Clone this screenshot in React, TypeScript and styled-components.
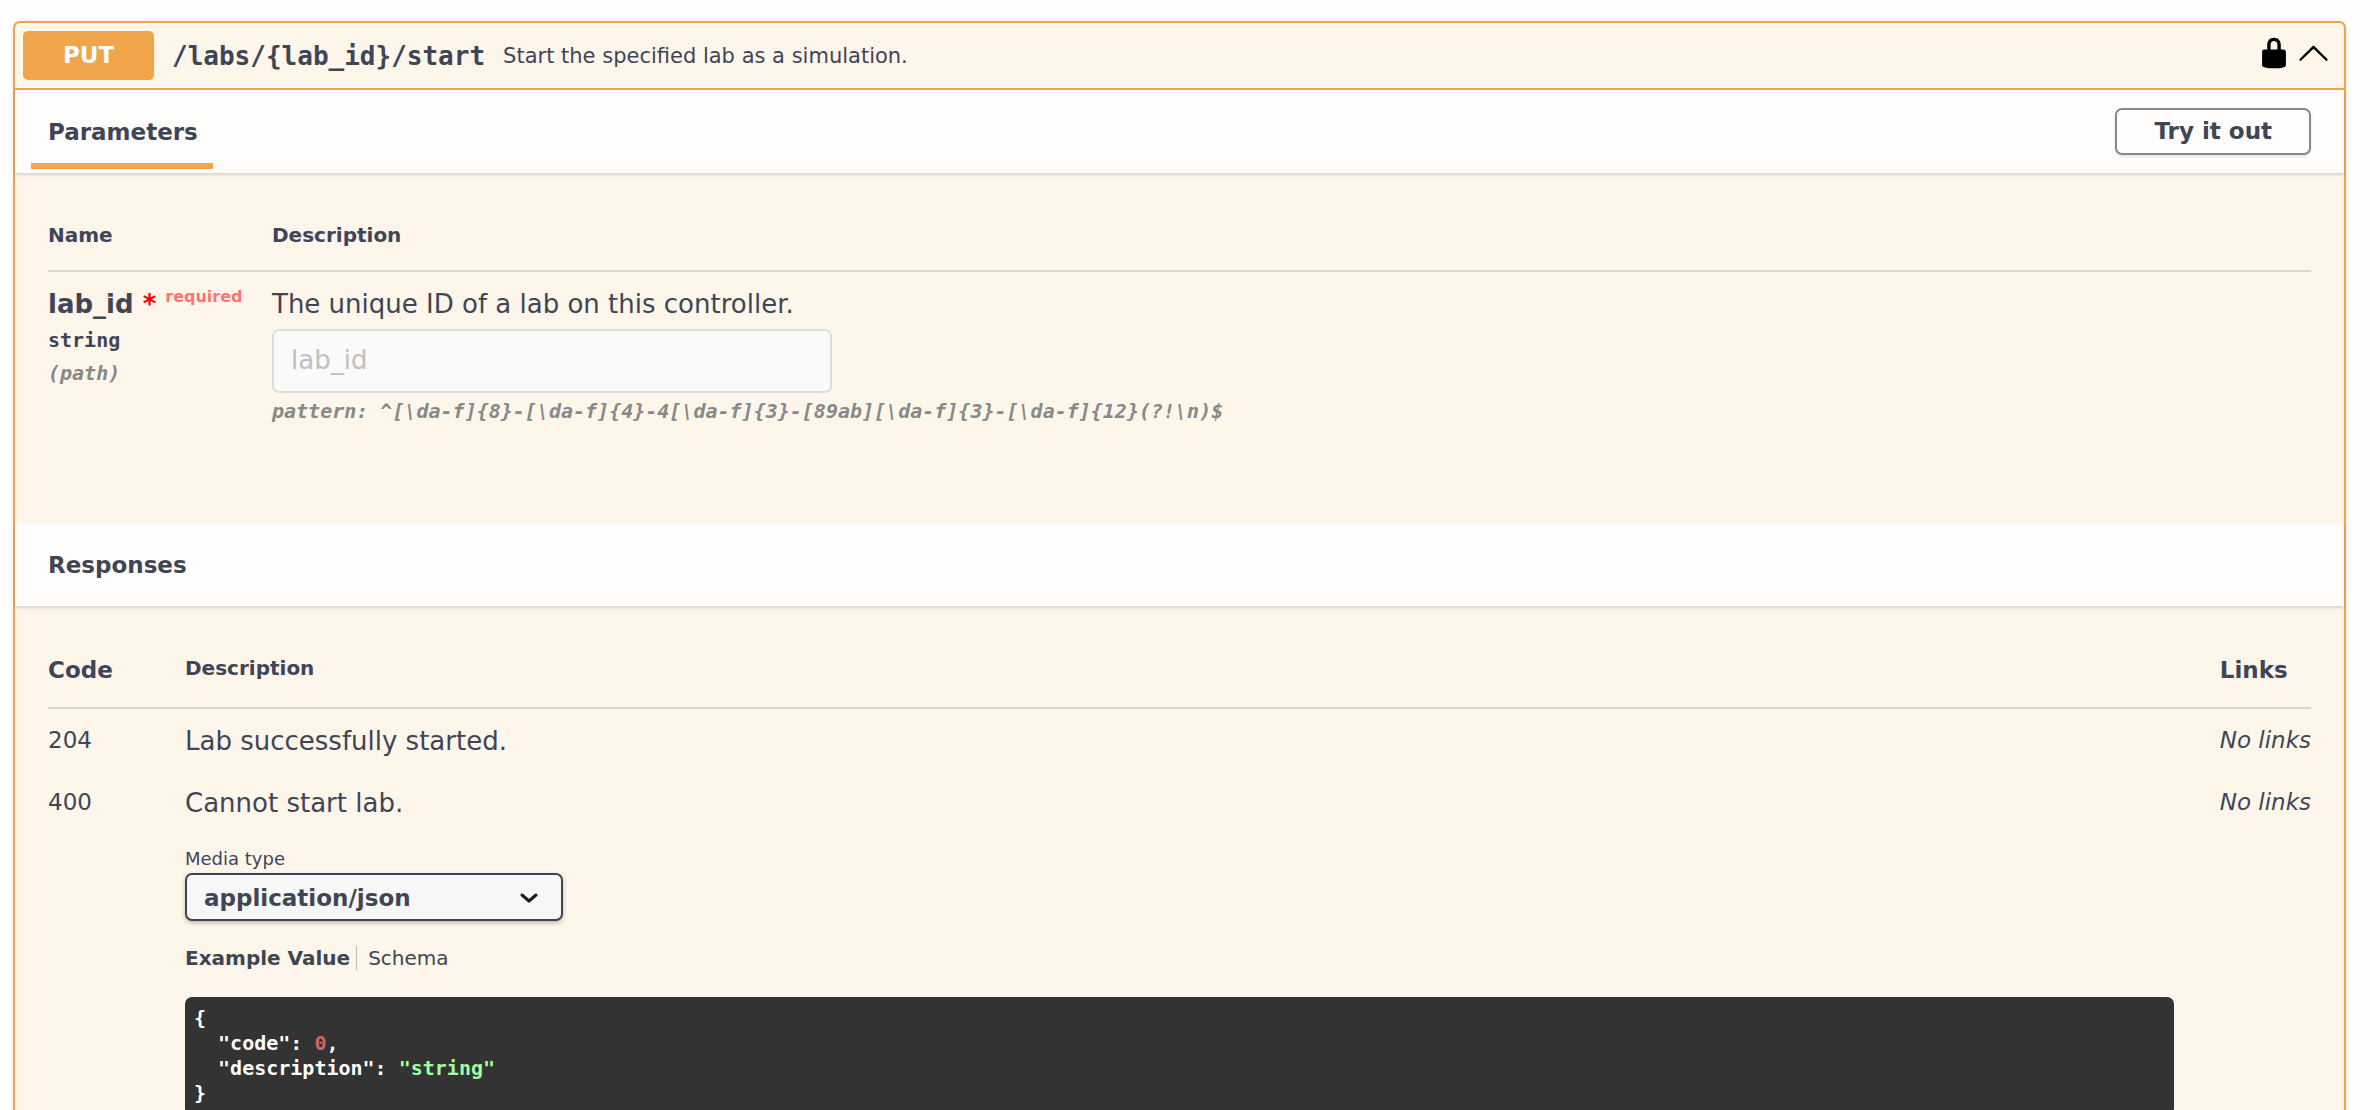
import React, { useState } from "react";
import styled, { createGlobalStyle } from "styled-components";

const ink = "#404556";
const orange = "#f0a54b";
const sans = `"DejaVu Sans", Verdana, sans-serif`;
const mono = `"DejaVu Sans Mono", monospace`;

const GlobalStyle = createGlobalStyle`
  *, *::before, *::after { box-sizing: border-box; }
  body { margin: 0; background: #fefefe; color: ${ink}; font-family: ${sans}; }
  button, input, select { font-family: inherit; color: inherit; }
  h4, p, pre { margin: 0; }
`;

const Page = styled.main`
  height: 100vh;
  overflow: hidden;
  padding: 21px 24px 0 13px;
`;

const Operation = styled.section`
  border: 2px solid ${orange};
  border-radius: 7px;
  background: #fef6ea;
  box-shadow: 0 0 4px rgba(0, 0, 0, 0.1);
`;

const Summary = styled.header`
  display: flex;
  align-items: center;
  padding: 8px 14px 8px 8px;
  border-bottom: 2px solid ${orange};
`;

const Method = styled.span`
  width: 131px;
  border-radius: 5px;
  background: ${orange};
  color: #fff;
  font-size: 23px;
  font-weight: 700;
  line-height: 49px;
  text-align: center;
`;

const Path = styled.span`
  padding: 0 18px;
  font-family: ${mono};
  font-size: 26px;
  font-weight: 700;
  line-height: 30px;
`;

const SummaryText = styled.span`
  flex: 1;
  font-size: 21px;
  line-height: 30px;
`;

const IconButton = styled.button`
  display: flex;
  margin: 0 0 6px 6px;
  padding: 0;
  border: 0;
  background: none;
  cursor: pointer;
`;

const SectionHeader = styled.div`
  display: flex;
  align-items: flex-start;
  justify-content: space-between;
  min-height: 83px;
  padding: 0 33px 0 16px;
  background: #fefdfc;
  box-shadow: 0 2px 3px rgba(0, 0, 0, 0.14);
`;

const SectionTitle = styled.h4<{ $active?: boolean }>`
  padding: 11px 15px 0 17px;
  border-bottom: 6px solid ${(p) => (p.$active ? orange : "transparent")};
  font-size: 23px;
  line-height: 62px;
`;

const TryButton = styled.button`
  align-self: center;
  padding: 0 37px;
  border: 2px solid #888;
  border-radius: 7px;
  background: transparent;
  box-shadow: 0 2px 3px rgba(0, 0, 0, 0.1);
  font-size: 23px;
  font-weight: 700;
  line-height: 43px;
`;

const SectionBody = styled.div<{ $bottom: number }>`
  padding: 50px 33px ${(p) => p.$bottom}px 33px;
`;

const Table = styled.table`
  width: 100%;
  border-collapse: separate;
  border-spacing: 0;
`;

const Th = styled.th<{ $large?: boolean; $width?: number }>`
  width: ${(p) => (p.$width ? `${p.$width}px` : "auto")};
  padding: 0 0 23px;
  border-bottom: 2px solid #dbd5cd;
  font-size: ${(p) => (p.$large ? 23 : 20)}px;
  line-height: ${(p) => (p.$large ? 28 : 24)}px;
  text-align: left;
  vertical-align: top;
`;

const Td = styled.td<{ $right?: number }>`
  padding: 17px ${(p) => p.$right ?? 0}px 15px 0;
  font-size: 23px;
  line-height: 28px;
  vertical-align: top;
  white-space: nowrap;
`;

const Prose = styled.p`
  font-size: 26px;
  line-height: 30px;
`;

const ParamName = styled.label`
  display: block;
  font-size: 26px;
  font-weight: 700;
  line-height: 30px;
`;

const Star = styled.span`
  color: #f00;
`;

const Required = styled.span`
  padding-left: 9px;
  color: rgba(255, 0, 0, 0.55);
  font-size: 16px;
  line-height: 0;
  vertical-align: 11px;
`;

const Meta = styled.div<{ $muted?: boolean; $gap: number }>`
  margin-top: ${(p) => p.$gap}px;
  color: ${(p) => (p.$muted ? "#888" : ink)};
  font-family: ${mono};
  font-size: 20px;
  font-style: ${(p) => (p.$muted ? "italic" : "normal")};
  font-weight: 700;
  line-height: 24px;
`;

const TextBox = styled.input`
  display: block;
  width: 560px;
  height: 64px;
  margin-top: 10px;
  padding: 0 17px 2px;
  border: 2px solid #dcdcdc;
  border-radius: 7px;
  background: #fafafa;
  font-size: 26px;
  &::placeholder { color: #c0c0c0; opacity: 1; }
`;

const MediaLabel = styled.label`
  display: block;
  margin-top: 30px;
  font-size: 18px;
  line-height: 22px;
`;

const SelectBox = styled.div`
  position: relative;
  width: 378px;
  margin-top: 3px;
  svg {
    position: absolute;
    top: 20px;
    right: 25px;
    pointer-events: none;
  }
`;

const Select = styled.select`
  display: block;
  width: 100%;
  height: 48px;
  padding: 2px 60px 0 17px;
  appearance: none;
  border: 2px solid #41444e;
  border-radius: 7px;
  background: #f7f7f7;
  box-shadow: 0 2px 4px rgba(0, 0, 0, 0.25);
  font-size: 23px;
  font-weight: 700;
`;

const Tabs = styled.div`
  display: flex;
  margin-top: 25px;
`;

const Tab = styled.button<{ $active: boolean }>`
  padding: 0;
  border: 0;
  background: none;
  font-size: 20px;
  font-weight: ${(p) => (p.$active ? 700 : 400)};
  line-height: 24px;
  & + & {
    margin-left: 6px;
    padding-left: 11px;
    border-left: 1px solid #bdb8b2;
  }
`;

const Code = styled.pre`
  margin-top: 27px;
  padding: 9px;
  border-radius: 7px;
  background: #333;
  color: #fff;
  font-family: ${mono};
  font-size: 20px;
  font-weight: 700;
  line-height: 25px;
  code { font-family: inherit; }
`;

const CodeLine = styled.span`
  display: block;
`;

const NumberValue = styled.span`
  color: #d36363;
`;

const StringValue = styled.span`
  color: #a2fca2;
`;

const LockIcon = () => (
  <svg width="34" height="34" viewBox="0 0 20 20" aria-hidden="true">
    <path d="M15.8 8H14V5.6C14 2.703 12.665 1 10 1 7.334 1 6 2.703 6 5.6V8H4c-.553 0-1 .646-1 1.199V17c0 .549.428 1.139.951 1.307l1.197.387C5.672 18.861 6.55 19 7.1 19h5.8c.549 0 1.428-.139 1.951-.307l1.196-.387c.524-.167.953-.757.953-1.306V9.199C17 8.646 16.352 8 15.8 8zM12 8H8V5.199C8 3.754 8.797 3 10 3c1.203 0 2 .754 2 2.199V8z" />
  </svg>
);

const ArrowUpIcon = () => (
  <svg width="33" height="33" viewBox="0 0 20 20" aria-hidden="true">
    <path d="M17.418 14.908c.272.268.709.268.979 0s.271-.701 0-.969l-7.908-7.83c-.27-.268-.707-.268-.979 0l-7.908 7.83c-.27.268-.27.701 0 .969.271.268.709.268.979 0L10 7.767l7.418 7.141z" />
  </svg>
);

const ChevronIcon = () => (
  <svg width="18" height="11" viewBox="0 0 18 11" aria-hidden="true">
    <path d="M2 2l7 6 7-6" fill="none" stroke="#1b1b1b" strokeWidth="3" strokeLinecap="round" strokeLinejoin="round" />
  </svg>
);

export default function App() {
  const [tab, setTab] = useState("Example Value");
  return (
    <>
      <GlobalStyle />
      <Page>
        <Operation>
          <Summary>
            <Method>PUT</Method>
            <Path>{"/labs/{lab_id}/start"}</Path>
            <SummaryText>Start the specified lab as a simulation.</SummaryText>
            <IconButton aria-label="Authorization required"><LockIcon /></IconButton>
            <IconButton aria-label="Collapse operation"><ArrowUpIcon /></IconButton>
          </Summary>

          <SectionHeader>
            <SectionTitle $active>Parameters</SectionTitle>
            <TryButton>Try it out</TryButton>
          </SectionHeader>
          <SectionBody $bottom={85}>
            <Table>
              <thead>
                <tr>
                  <Th $width={224}>Name</Th>
                  <Th>Description</Th>
                </tr>
              </thead>
              <tbody>
                <tr>
                  <Td>
                    <ParamName htmlFor="lab-id">
                      lab_id <Star>*</Star>
                      <Required>required</Required>
                    </ParamName>
                    <Meta $gap={9}>string</Meta>
                    <Meta $muted $gap={9}>(path)</Meta>
                  </Td>
                  <Td>
                    <Prose>The unique ID of a lab on this controller.</Prose>
                    <TextBox id="lab-id" placeholder="lab_id" />
                    <Meta $muted $gap={6}>
                      {"pattern: ^[\\da-f]{8}-[\\da-f]{4}-4[\\da-f]{3}-[89ab][\\da-f]{3}-[\\da-f]{12}(?!\\n)$"}
                    </Meta>
                  </Td>
                </tr>
              </tbody>
            </Table>
          </SectionBody>

          <SectionHeader>
            <SectionTitle>Responses</SectionTitle>
          </SectionHeader>
          <SectionBody $bottom={50}>
            <Table>
              <thead>
                <tr>
                  <Th $large $width={137}>Code</Th>
                  <Th>Description</Th>
                  <Th $large $width={91}>Links</Th>
                </tr>
              </thead>
              <tbody>
                <tr>
                  <Td>204</Td>
                  <Td $right={46}><Prose>Lab successfully started.</Prose></Td>
                  <Td><i>No links</i></Td>
                </tr>
                <tr>
                  <Td>400</Td>
                  <Td $right={46}>
                    <Prose>Cannot start lab.</Prose>
                    <MediaLabel htmlFor="media-type">Media type</MediaLabel>
                    <SelectBox>
                      <Select id="media-type" defaultValue="application/json">
                        <option>application/json</option>
                      </Select>
                      <ChevronIcon />
                    </SelectBox>
                    <Tabs>
                      {["Example Value", "Schema"].map((name) => (
                        <Tab key={name} $active={tab === name} onClick={() => setTab(name)}>
                          {name}
                        </Tab>
                      ))}
                    </Tabs>
                    <Code>
                      <code>
                        <CodeLine>{"{"}</CodeLine>
                        <CodeLine>
                          {'  "code": '}
                          <NumberValue>0</NumberValue>,
                        </CodeLine>
                        <CodeLine>
                          {'  "description": '}
                          <StringValue>"string"</StringValue>
                        </CodeLine>
                        <CodeLine>{"}"}</CodeLine>
                      </code>
                    </Code>
                  </Td>
                  <Td><i>No links</i></Td>
                </tr>
              </tbody>
            </Table>
          </SectionBody>
        </Operation>
      </Page>
    </>
  );
}
